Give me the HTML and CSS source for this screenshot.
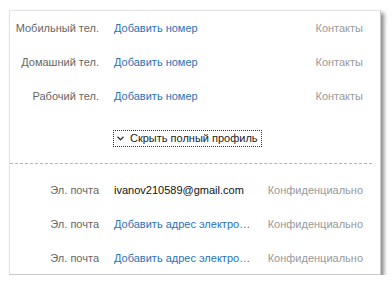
FILE: index.html
```html
<!DOCTYPE html>
<html lang="ru">
<head>
<meta charset="utf-8">
<link rel="stylesheet" href="styles.css">
</head>
<body>
<div class="card">
  <div class="grid">
    <div class="label">Мобильный тел.</div>
    <div class="value link">Добавить номер</div>
    <div class="scope">Контакты</div>
    <div class="label">Домашний тел.</div>
    <div class="value link">Добавить номер</div>
    <div class="scope">Контакты</div>
    <div class="label">Рабочий тел.</div>
    <div class="value link">Добавить номер</div>
    <div class="scope">Контакты</div>
  </div>
  <div class="toggle-row">
    <span class="toggle">
      <svg class="chev" width="7" height="5" viewBox="0 0 7 5"><path d="M0.5 0.8 L3.5 3.8 L6.5 0.8" fill="none" stroke="#333" stroke-width="1.3"/></svg>
      Скрыть полный профиль
    </span>
  </div>
  <div class="divider"></div>
  <div class="grid">
    <div class="label">Эл. почта</div>
    <div class="value">ivanov210589@gmail.com</div>
    <div class="scope">Конфиденциально</div>
    <div class="label">Эл. почта</div>
    <div class="value link">Добавить адрес электронной почты</div>
    <div class="scope">Конфиденциально</div>
    <div class="label">Эл. почта</div>
    <div class="value link">Добавить адрес электронной почты</div>
    <div class="scope">Конфиденциально</div>
  </div>
</div>
</body>
</html>
```
FILE: styles.css
```css
html, body {
  margin: 0;
  padding: 0;
  background: #ffffff;
}
body {
  font-family: "Liberation Sans", Arial, sans-serif;
  font-size: 11px;
  color: #222;
}
.card {
  margin: 10px 0 0 9px;
  width: 372px;
  height: 265px;
  box-sizing: border-box;
  border: 1px solid #e4e4e4;
  border-right-color: #c8c8c8;
  border-bottom-color: #c8c8c8;
  box-shadow: 3px 3px 4px rgba(0, 0, 0, 0.45);
  background: #fff;
}
.grid {
  display: grid;
  grid-template-columns: 89px 140px 1fr;
  column-gap: 14px;
  grid-auto-rows: 34px;
  align-items: center;
  padding-right: 17px;
}
.label {
  text-align: right;
  white-space: nowrap;
  color: #666;
}
.value {
  white-space: nowrap;
  overflow: hidden;
  text-overflow: ellipsis;
  color: #111;
  padding-left: 1px;
}
.link {
  color: #2a72b6;
}
.scope {
  text-align: right;
  white-space: nowrap;
  color: #999;
}
.toggle-row {
  height: 50px;
  display: flex;
  align-items: center;
  padding-left: 103px;
}
.toggle {
  display: inline-flex;
  align-items: center;
  gap: 6px;
  height: 15px;
  padding: 0 3px 0 3px;
  border: 1px dotted #333;
  color: #222;
}
.chev {
  display: block;
}
.divider {
  margin: 0 8px 9px 0;
  border-top: 1px dashed #b4b4b4;
}
```
